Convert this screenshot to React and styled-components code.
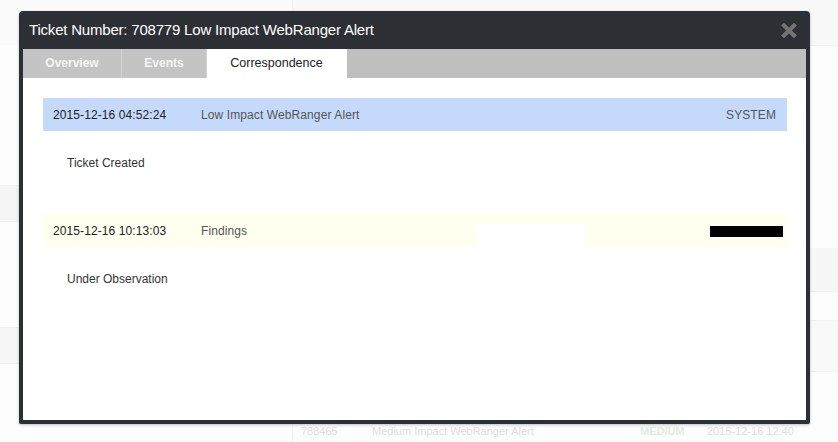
import React from "react";
import styled, { createGlobalStyle } from "styled-components";

const Global = createGlobalStyle`
  html, body { margin: 0; padding: 0; background: #fdfdfd; }
  body { font-family: "Liberation Sans", Arial, sans-serif; }
`;

const Page = styled.div`
  position: relative;
  width: 838px;
  height: 442px;
  overflow: hidden;
  background: #fdfdfd;
  display: grid;
  grid-template-columns: 293px 1fr;
`;

const BgColumn = styled.div`
  display: flex;
  flex-direction: column;
  border-right: ${(p) => (p.$divider ? "1px solid #f1f1f1" : "none")};
`;

const Band = styled.div`
  height: ${(p) => p.$h}px;
  flex: none;
  background: ${(p) => p.$bg || "transparent"};
  border-bottom: ${(p) => (p.$line ? "1px solid #f0f0f0" : "none")};
`;

const FaintRow = styled.div`
  height: 16px;
  display: flex;
  align-items: center;
  font-size: 11px;
  color: #e0e0e0;
  white-space: nowrap;
`;

const FaintCell = styled.span`
  width: ${(p) => p.$w}px;
  flex: none;
  padding-left: ${(p) => p.$pl || 0}px;
  color: ${(p) => p.$c || "#dedede"};
  font-weight: ${(p) => (p.$b ? 700 : 400)};
`;

const Dialog = styled.div`
  position: absolute;
  left: 19px;
  top: 11px;
  width: 791px;
  height: 413px;
  box-sizing: border-box;
  background: #2c3035;
  border-radius: 4px 4px 2px 2px;
  padding: 0 4px 4px;
  display: flex;
  flex-direction: column;
  box-shadow: 0 1px 3px rgba(0, 0, 0, 0.25);
`;

const TitleBar = styled.div`
  height: 38px;
  flex: none;
  display: flex;
  align-items: center;
  justify-content: space-between;
  padding: 0 9px 0 6px;
`;

const Title = styled.div`
  color: #ffffff;
  font-size: 15px;
  letter-spacing: -0.2px;
  padding-bottom: 1px;
`;

const Close = styled.button`
  border: 0;
  background: none;
  padding: 0;
  width: 16px;
  height: 15px;
  display: flex;
  align-items: center;
  justify-content: center;
  cursor: pointer;
`;

const Tabs = styled.div`
  height: 29px;
  flex: none;
  display: flex;
  background: #bfbfbf;
`;

const Tab = styled.div`
  display: flex;
  align-items: center;
  padding: 0 0 1px;
  height: 100%;
  font-size: ${(p) => (p.$active ? "12.5px" : "12px")};
  font-weight: ${(p) => (p.$active ? 400 : 700)};
  color: ${(p) => (p.$active ? "#222" : "#f6f6f6")};
  background: ${(p) => (p.$active ? "#ffffff" : "#c4c4c4")};
  border-right: 1px solid ${(p) => (p.$active ? "#ffffff" : "#d2d2d2")};
  box-sizing: border-box;
  width: ${(p) => p.$w}px;
  justify-content: center;
`;

const Content = styled.div`
  flex: 1;
  background: #ffffff;
  padding: 20px 19px 0 20px;
`;

const EntryHead = styled.div`
  position: relative;
  height: 33px;
  display: flex;
  align-items: center;
  padding: 0 11px 0 10px;
  font-size: 12px;
  letter-spacing: 0.1px;
  background: ${(p) => (p.$tone === "blue" ? "#c5dafb" : "#feffee")};
`;

const DateCell = styled.span`
  width: 148px;
  flex: none;
  color: #222;
`;

const Subject = styled.span`
  flex: 1;
  color: #555;
`;

const Author = styled.span`
  color: #555;
`;

const Redact = styled.span`
  display: block;
  width: 73px;
  height: 11px;
  background: #000;
  margin-right: -7px;
  margin-top: 1px;
`;

const WhiteOut = styled.span`
  position: absolute;
  left: 433px;
  bottom: 0;
  width: 109px;
  height: 23px;
  background: #fff;
`;

const Note = styled.div`
  padding: 25px 24px 0;
  height: 83px;
  box-sizing: border-box;
  font-size: 12px;
  color: #333;
`;

const CloseIcon = () => (
  <svg width="16" height="15" viewBox="0 0 16 15">
    <path
      d="M3 2.5 L13 12.5 M13 2.5 L3 12.5"
      stroke="#737373"
      strokeWidth="4"
      strokeLinecap="square"
    />
  </svg>
);

const leftBands = [
  { h: 45, bg: "#fbfbfb" },
  { h: 140, bg: "#fdfdfd", line: true },
  { h: 35, bg: "#f5f5f5", line: true },
  { h: 105, bg: "#fdfdfd", line: true },
  { h: 35, bg: "#f6f6f6", line: true },
  { h: 66, bg: "#fdfdfd" },
];

const rightBands = [
  { h: 45, bg: "#f8f8f8", line: true },
  { h: 202, bg: "#fdfdfd" },
  { h: 43, bg: "#f7f7f7", line: true },
  { h: 28, bg: "#fdfdfd", line: true },
  { h: 50, bg: "#f9f9f9", line: true },
  { h: 51, bg: "#fdfdfd" },
];

const entries = [
  {
    date: "2015-12-16 04:52:24",
    subject: "Low Impact WebRanger Alert",
    author: "SYSTEM",
    tone: "blue",
    note: "Ticket Created",
  },
  {
    date: "2015-12-16 10:13:03",
    subject: "Findings",
    redacted: true,
    tone: "yellow",
    note: "Under Observation",
  },
];

export default function App() {
  return (
    <>
      <Global />
      <Page>
        <BgColumn $divider>
          {leftBands.map((b, i) => (
            <Band key={i} $h={b.h} $bg={b.bg} $line={b.line} />
          ))}
        </BgColumn>
        <BgColumn>
          {rightBands.map((b, i) => (
            <Band key={i} $h={b.h} $bg={b.bg} $line={b.line} />
          ))}
          <FaintRow>
            <FaintCell $w={71} $pl={8}>788465</FaintCell>
            <FaintCell $w={268}>Medium Impact WebRanger Alert</FaintCell>
            <FaintCell $w={67} $c="#dcefdc" $b>MEDIUM</FaintCell>
            <FaintCell $w={110}>2015-12-16 12:40</FaintCell>
          </FaintRow>
        </BgColumn>

        <Dialog>
          <TitleBar>
            <Title>Ticket Number: 708779 Low Impact WebRanger Alert</Title>
            <Close aria-label="Close">
              <CloseIcon />
            </Close>
          </TitleBar>
          <Tabs>
            <Tab $w={99}>Overview</Tab>
            <Tab $w={85}>Events</Tab>
            <Tab $w={140} $active>
              Correspondence
            </Tab>
          </Tabs>
          <Content>
            {entries.map((e) => (
              <React.Fragment key={e.date}>
                <EntryHead $tone={e.tone}>
                  <DateCell>{e.date}</DateCell>
                  <Subject>{e.subject}</Subject>
                  {e.redacted ? (
                    <>
                      <WhiteOut />
                      <Redact />
                    </>
                  ) : (
                    <Author>{e.author}</Author>
                  )}
                </EntryHead>
                <Note>{e.note}</Note>
              </React.Fragment>
            ))}
          </Content>
        </Dialog>
      </Page>
    </>
  );
}
